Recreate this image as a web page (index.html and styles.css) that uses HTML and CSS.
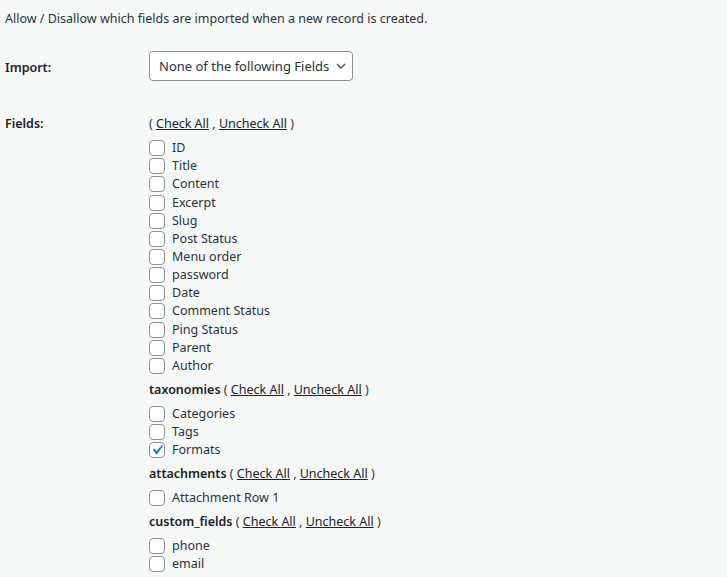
FILE: index.html
```html
<!DOCTYPE html>
<html>
<head>
<meta charset="utf-8">
<link rel="stylesheet" href="styles.css">
</head>
<body>
<div class="page">
  <p class="intro">Allow / Disallow which fields are imported when a new record is created.</p>
  <div class="row row-import">
    <div class="label">Import:</div>
    <div class="value">
      <div class="select">
        <span>None of the following Fields</span>
        <svg class="chev" width="10" height="6" viewBox="0 0 10 6"><polyline points="1,1 5,5 9,1" fill="none" stroke="#50575e" stroke-width="1.5"/></svg>
      </div>
    </div>
  </div>
  <div class="row row-fields">
    <div class="label">Fields:</div>
    <div class="value">
      <div class="head">( <a href="#">Check All</a> , <a href="#">Uncheck All</a> )</div>
      <ul class="list list-main">
        <li><span class="box"></span>ID</li>
        <li><span class="box"></span>Title</li>
        <li><span class="box"></span>Content</li>
        <li><span class="box"></span>Excerpt</li>
        <li><span class="box"></span>Slug</li>
        <li><span class="box"></span>Post Status</li>
        <li><span class="box"></span>Menu order</li>
        <li><span class="box"></span>password</li>
        <li><span class="box"></span>Date</li>
        <li><span class="box"></span>Comment Status</li>
        <li><span class="box"></span>Ping Status</li>
        <li><span class="box"></span>Parent</li>
        <li><span class="box"></span>Author</li>
      </ul>
      <div class="head"><b>taxonomies</b> ( <a href="#">Check All</a> , <a href="#">Uncheck All</a> )</div>
      <ul class="list">
        <li><span class="box"></span>Categories</li>
        <li><span class="box"></span>Tags</li>
        <li><span class="box checked"><svg viewBox="0 0 20 20" width="20" height="20"><path d="M14.83 4.89l1.34.94-5.81 8.38H9.02L5.78 9.67l1.34-1.25 2.57 2.4z" fill="#3582c4"/></svg></span>Formats</li>
      </ul>
      <div class="head"><b>attachments</b> ( <a href="#">Check All</a> , <a href="#">Uncheck All</a> )</div>
      <ul class="list">
        <li><span class="box"></span>Attachment Row 1</li>
      </ul>
      <div class="head"><b>custom_fields</b> ( <a href="#">Check All</a> , <a href="#">Uncheck All</a> )</div>
      <ul class="list">
        <li><span class="box"></span>phone</li>
        <li><span class="box"></span>email</li>
      </ul>
    </div>
  </div>
</div>
</body>
</html>
```
FILE: styles.css
```css
html, body {
  margin: 0;
  padding: 0;
  background: #f6f7f7;
}
body {
  font-family: "Noto Sans", "Open Sans", sans-serif;
  font-size: 12.5px;
  line-height: 18px;
  color: #2c3338;
}
.page {
  padding: 10px 0 0 5px;
}
.intro {
  margin: 0;
}
.row {
  display: flex;
}
.label {
  width: 144px;
  flex: none;
  font-weight: 600;
  color: #1d2327;
}
.row-import {
  margin-top: 23px;
  align-items: center;
}
.row-import .label {
  padding-top: 3px;
}
.row-fields {
  margin-top: 34px;
}
.select {
  display: flex;
  align-items: center;
  height: 28px;
  width: 187px;
  padding: 0 6px 0 9px;
  border: 1px solid #8c8f94;
  border-radius: 4px;
  background: #fff;
  font-size: 13px;
  color: #2c3338;
  white-space: nowrap;
  justify-content: space-between;
}
.chev {
  display: block;
  flex: none;
}
.head {
  margin: 6px 0;
}
.row-fields .head:first-child {
  margin-top: 0;
}
.head b {
  font-weight: 600;
  color: #1d2327;
}
.head a {
  color: #1d2327;
  text-decoration: underline;
}
.list {
  list-style: none;
  margin: 0;
  padding: 0;
}
.list li {
  display: flex;
  align-items: center;
  height: 18px;
}
.list-main li {
  height: 18.17px;
}
.box {
  box-sizing: border-box;
  width: 16px;
  height: 16px;
  border: 1px solid #8c8f94;
  border-radius: 4px;
  background: #fff;
  margin-right: 7px;
  flex: none;
  display: flex;
  align-items: center;
  justify-content: center;
  overflow: visible;
}
.box svg {
  flex: none;
  margin: -2px;
}
```
